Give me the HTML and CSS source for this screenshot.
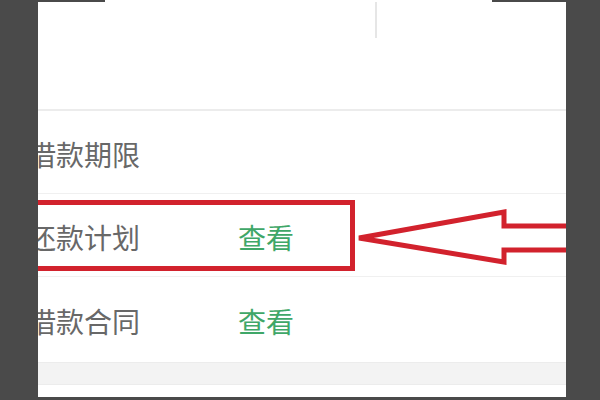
FILE: index.html
```html
<!DOCTYPE html>
<html lang="zh">
<head>
<meta charset="utf-8">
<link rel="stylesheet" href="styles.css">
</head>
<body>
<div class="frame">
  <div class="side side-left"></div>
  <div class="panel">
    <div class="topstrip"><span class="seg seg-a"></span><span class="seg seg-b"></span></div>
    <div class="header"><span class="vline"></span></div>
    <div class="list">
      <div class="row"><span class="label">借款期限</span></div>
      <div class="row"><span class="label">还款计划</span><span class="link">查看</span></div>
      <div class="row"><span class="label">借款合同</span><span class="link">查看</span></div>
    </div>
    <div class="band"></div>
    <div class="foot"></div>
    <svg class="mark" width="528" height="400" viewBox="0 0 528 400" xmlns="http://www.w3.org/2000/svg">
      <rect x="-20" y="202.5" width="334.5" height="66" fill="none" stroke="#d2222d" stroke-width="5"/>
      <polyline points="540,226 466,226 466,212 321,238 466,262 466,250 540,250" fill="none" stroke="#d2222d" stroke-width="5" stroke-linejoin="miter"/>
    </svg>
  </div>
  <div class="side side-right"></div>
</div>
</body>
</html>
```
FILE: styles.css
```css
html, body {
  margin: 0;
  padding: 0;
  width: 600px;
  height: 400px;
  overflow: hidden;
  background: #4a4a4a;
}
.frame {
  display: flex;
  width: 600px;
  height: 400px;
}
.side {
  background: #4a4a4a;
}
.side-left { width: 38px; }
.side-right { width: 34px; }
.panel {
  position: relative;
  width: 528px;
  height: 397px;
  background: #fff;
  overflow: hidden;
  display: flex;
  flex-direction: column;
  font-family: "Noto Sans CJK SC", "Noto Sans", sans-serif;
}
.topstrip {
  display: flex;
  justify-content: space-between;
  height: 2px;
}
.seg {
  background: #4a4a4a;
  height: 2px;
}
.seg-a { width: 67px; }
.seg-b { width: 74px; }
.header {
  height: 107px;
  border-bottom: 2px solid #ececec;
}
.vline {
  display: block;
  margin-left: 337px;
  width: 2px;
  height: 36px;
  background: #e6e6e6;
}
.list {
  display: flex;
  flex-direction: column;
}
.row {
  height: 83px;
  padding-top: 4px;
  box-sizing: border-box;
  display: flex;
  align-items: center;
  border-bottom: 1px solid #f0f0f0;
}
.row:last-child {
  border-bottom: none;
}
.label {
  margin-left: -10px;
  width: 210px;
  font-size: 28px;
  color: #686868;
  line-height: 1;
}
.link {
  font-size: 28px;
  color: #3fa768;
  line-height: 1;
}
.band {
  margin-top: 2px;
  height: 21px;
  background: #f3f3f3;
  border-top: 1px solid #ececec;
  border-bottom: 1px solid #ececec;
}
.foot {
  flex: 1;
  background: #fff;
}
.mark {
  position: absolute;
  left: 0;
  top: 0;
}
```
